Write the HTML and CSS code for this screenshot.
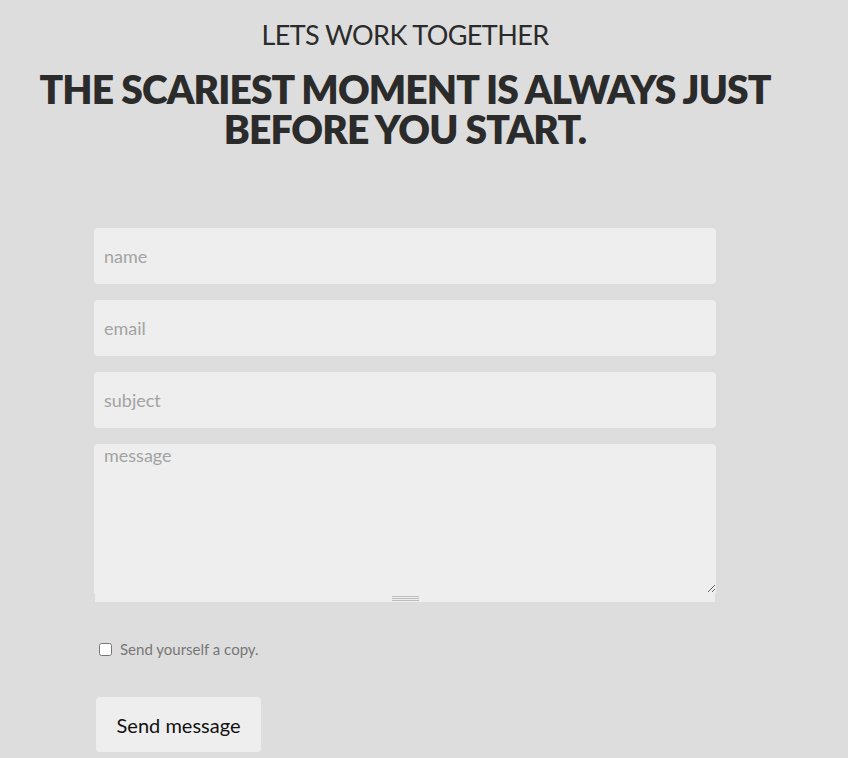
FILE: index.html
```html
<!DOCTYPE html>
<html>
<head>
<meta charset="utf-8">
<link rel="stylesheet" href="styles.css">
</head>
<body>
<div class="page">
  <h3 class="kicker">LETS WORK TOGETHER</h3>
  <h2 class="headline">THE SCARIEST MOMENT IS ALWAYS JUST<br>BEFORE YOU START.</h2>
  <form class="contact">
    <input class="field" type="text" placeholder="name">
    <input class="field" type="text" placeholder="email">
    <input class="field" type="text" placeholder="subject">
    <div class="area-wrap">
      <textarea class="area" placeholder="message"></textarea>
      <div class="grippie"><span class="grip"></span></div>
    </div>
    <label class="copy"><input type="checkbox" class="check"><span>Send yourself a copy.</span></label>
    <button type="button" class="send">Send message</button>
  </form>
</div>
</body>
</html>
```
FILE: styles.css
```css
html, body {
  margin: 0;
  padding: 0;
  background: #dddddd;
}
body {
  font-family: Lato, "Open Sans", sans-serif;
  color: #2b2b2b;
}
.page {
  width: 810px;
  display: flex;
  flex-direction: column;
  align-items: center;
}
.kicker {
  margin: 18px 0 0;
  font-weight: 400;
  font-size: 27px;
  letter-spacing: -0.6px;
  line-height: 34px;
  color: #2b2b2b;
}
.headline {
  margin: 17px 0 0;
  font-weight: 800;
  font-size: 39px;
  letter-spacing: -0.9px;
  line-height: 40px;
  text-align: center;
  color: #2b2b2b;
}
.contact {
  margin-top: 79px;
  width: 622px;
  display: flex;
  flex-direction: column;
}
.field {
  box-sizing: border-box;
  height: 56px;
  margin: 0 0 16px;
  padding: 0 10px;
  border: none;
  border-radius: 4px;
  background: #eeeeee;
  font-family: inherit;
  font-size: 18px;
  color: #333;
  outline: none;
}
.field::placeholder, .area::placeholder {
  color: #a3a3a3;
}
.area-wrap {
  display: flex;
  flex-direction: column;
}
.area {
  box-sizing: border-box;
  height: 149px;
  margin: 0;
  padding: 0 10px;
  border: none;
  border-radius: 4px 4px 0 0;
  background: #eeeeee;
  font-family: inherit;
  font-size: 18px;
  color: #333;
  outline: none;
  display: block;
}
.grippie {
  height: 9px;
  margin: 0 1px;
  background: #eeeeee;
  display: flex;
  justify-content: center;
  align-items: flex-end;
}
.grip {
  width: 27px;
  height: 5px;
  margin: 0 0 1px 0;
  border-top: 1px solid #bdbdbd;
  border-bottom: 1px solid #bdbdbd;
  box-sizing: border-box;
  background: linear-gradient(#eee 1px, #bdbdbd 1px, #bdbdbd 2px, #eee 2px);
}
.copy {
  margin: 38px 0 0 5px;
  display: flex;
  align-items: center;
  font-size: 15px;
  color: #777;
}
.check {
  margin: 0 8px 0 0;
  width: 13px;
  height: 13px;
}
.send {
  align-self: flex-start;
  margin: 39px 0 0 2px;
  width: 165px;
  height: 55px;
  border: none;
  border-radius: 4px;
  background: #eeeeee;
  font-family: inherit;
  font-size: 20px;
  color: #111;
}
```
